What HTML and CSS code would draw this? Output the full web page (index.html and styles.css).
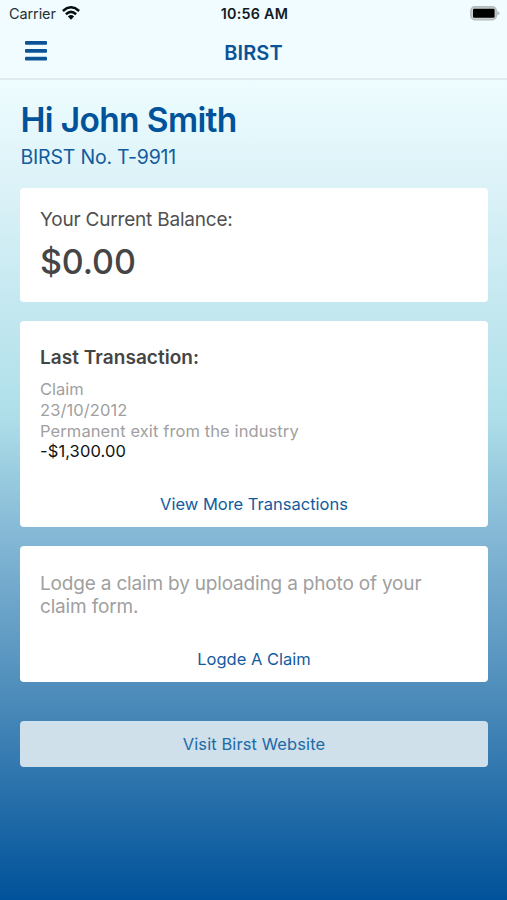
FILE: index.html
```html
<!DOCTYPE html>
<html lang="en">
<head>
<meta charset="utf-8">
<title>BIRST</title>
<link rel="stylesheet" href="styles.css">
</head>
<body>
<header class="header">
  <div class="status">
    <div class="carrier"><span>Carrier</span>
      <svg class="wifi" width="18" height="14" viewBox="0 0 18 14" fill="none" stroke="#080e10" stroke-width="2.5"><path d="M.9 5Q9-2.4 17.1 5"/><path d="M3.9 8.2Q9 3.6 14.1 8.2"/><path d="M9 13.7 5.9 10.4Q9 7.7 12.1 10.4Z" fill="#080e10" stroke="none"/></svg>
    </div>
    <span class="time">10:56 AM</span>
    <svg class="battery" width="31" height="15" viewBox="0 0 31 15"><rect x="1.9" y=".9" width="25.4" height="12.8" rx="4" fill="#c9d1d3" stroke="#b4bcbe" stroke-width="1.6"/><rect x="4" y="2.8" width="21.6" height="9" rx="1.2" fill="#000"/><path d="M28.2 5Q30.6 6 30.6 7.3T28.2 9.6Z" fill="#b4bcbe"/></svg>
  </div>
  <nav class="nav">
    <button class="menu" aria-label="Menu"><svg width="22" height="20" viewBox="0 0 22 20" fill="#0a5397"><rect width="22" height="3.8" rx="1"/><rect y="7.9" width="22" height="3.8" rx="1"/><rect y="15.8" width="22" height="3.8" rx="1"/></svg></button>
    <span class="title">BIRST</span>
    <span></span>
  </nav>
</header>
<main class="content">
  <h1 class="greeting">Hi John Smith</h1>
  <p class="member">BIRST No. T-9911</p>
  <section class="card balance">
    <h2 class="label">Your Current Balance:</h2>
    <p class="amount">$0.00</p>
  </section>
  <section class="card transaction">
    <h2 class="heading">Last Transaction:</h2>
    <p class="line claim">Claim</p>
    <p class="line date">23/10/2012</p>
    <p class="line reason">Permanent exit from the industry</p>
    <p class="line value">-$1,300.00</p>
    <a class="link more">View More Transactions</a>
  </section>
  <section class="card lodge">
    <p class="prompt">Lodge a claim by uploading a photo of your claim form.</p>
    <a class="link">Logde A Claim</a>
  </section>
  <a class="website">Visit Birst Website</a>
</main>
</body>
</html>
```
FILE: styles.css
```css
* { box-sizing: border-box; }
body, h1, h2, p { margin: 0; }
body {
  height: 900px;
  display: flex;
  flex-direction: column;
  overflow: hidden;
  font-family: Inter, "Liberation Sans", sans-serif;
}
.header {
  height: 80px;
  background: #f0fcff;
  border-bottom: 2px solid #dfebed;
}
.status, .nav {
  display: grid;
  grid-template-columns: 1fr auto 1fr;
  align-items: center;
}
.status { height: 27px; padding: 0 7px 0 9px; }
.carrier {
  display: flex;
  align-items: center;
  gap: 6px;
  color: #263034;
  font-size: 14.5px;
  letter-spacing: -.1px;
}
.wifi { margin-top: -2px; }
.time { color: #121a1d; font-size: 14.3px; font-weight: 600; letter-spacing: .25px; }
.battery { justify-self: end; }
.nav { height: 51px; padding: 0 25px; }
.menu { display: flex; margin-top: -3px; padding: 0; border: 0; background: none; }
.title { color: #0a5397; font-size: 20px; font-weight: 600; letter-spacing: .15px; }
.content {
  flex: 1;
  display: flex;
  flex-direction: column;
  padding: 19px 19px 0 20px;
  background: linear-gradient(#eefdff, #daf1f7 14%, #aedfe9 41%, #86b9d6 55%, #4a8ab9 76%, #00529a);
}
.greeting { color: #00529a; font-size: 33.5px; line-height: 42px; font-weight: 600; letter-spacing: -.65px; }
.member { color: #125b9e; font-size: 19.5px; line-height: 24px; margin-top: 4px; white-space: nowrap; letter-spacing: -.2px; }
.greeting, .member { padding-left: .5px; }
.card {
  display: flex;
  flex-direction: column;
  padding: 0 20px;
  background: #fff;
  border-radius: 4px;
  margin-bottom: 19px;
}
.balance { height: 114px; margin-top: 19px; padding-top: 20px; }
.label { color: #505050; font-size: 19px; line-height: 24px; font-weight: 400; letter-spacing: -.2px; }
.amount { color: #454545; font-size: 34px; line-height: 40px; font-weight: 500; margin-top: 10px; letter-spacing: -.1px; }
.transaction { height: 206px; padding-top: 25px; }
.heading { color: #454545; font-size: 19px; line-height: 24px; font-weight: 600; margin-bottom: 9px; letter-spacing: .05px; }
.line { color: #a0a0a0; font-size: 16.5px; line-height: 20.8px; }
.date, .reason, .value { letter-spacing: .1px; }
.value { color: #111; }
.link { align-self: center; margin-top: auto; margin-bottom: 12px; color: #125b9e; font-size: 16.5px; line-height: 21px; }
.lodge { height: 136px; padding-top: 26px; }
.prompt { max-width: 400px; color: #a0a0a0; font-size: 19px; line-height: 23px; letter-spacing: -.18px; }
.website {
  height: 46px;
  margin-top: 20px;
  border-radius: 4px;
  background: #cfe0eb;
  color: #206aa7;
  font-size: 16.5px;
  line-height: 46px;
  letter-spacing: .1px;
  text-align: center;
}
```
